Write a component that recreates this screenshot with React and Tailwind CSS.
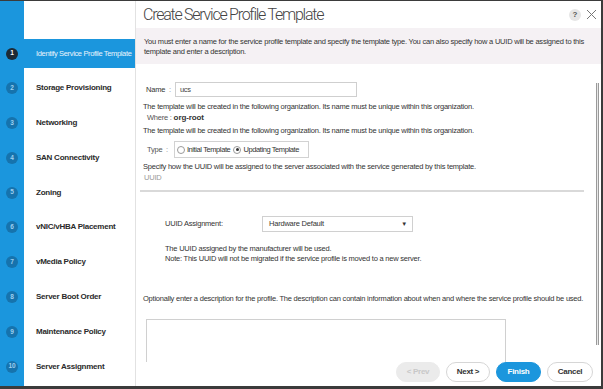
import React from 'react'

const STEPS = [
  'Identify Service Profile Template',
  'Storage Provisioning',
  'Networking',
  'SAN Connectivity',
  'Zoning',
  'vNIC/vHBA Placement',
  'vMedia Policy',
  'Server Boot Order',
  'Maintenance Policy',
  'Server Assignment',
]

const ACTIVE = 0
const BLUE = 'bg-[#1b96dd]'

function Sidebar() {
  return (
    <div className="flex w-[136px] shrink-0">
      {/* numbered strip */}
      <div className={`w-[24px] ${BLUE} flex flex-col pt-[38px] gap-[5.8px]`}>
        {STEPS.map((s, i) => (
          <div key={s} className="h-[29px] flex items-center justify-center">
            <span className={`w-[12px] h-[12px] rounded-full flex items-center justify-center text-[6.5px] font-bold leading-none ${i === ACTIVE ? 'bg-[#1d2a35] text-white' : 'bg-[#1673ad] text-[#9fd0f0]'}`}>
              {i + 1}
            </span>
          </div>
        ))}
      </div>
      {/* labels */}
      <div className="flex-1 bg-white flex flex-col pt-[38px] gap-[5.8px] border-r border-[#e2e2e2]">
        {STEPS.map((s, i) => (
          <div key={s} className={`h-[29px] flex items-center pl-[12px] whitespace-nowrap ${i === ACTIVE ? `${BLUE} text-[#e8f4fc] font-normal text-[7.5px] tracking-[-0.35px]` : 'text-[#2a2a2a] font-bold text-[8px] tracking-[-0.25px]'}`}>
            {s}
          </div>
        ))}
      </div>
    </div>
  )
}

function Radio({ checked, label }) {
  return (
    <span className="flex items-center gap-[2px]">
      <span className="w-[8px] h-[8px] rounded-full border border-[#9a9a9a] bg-white flex items-center justify-center">
        {checked && <span className="w-[3px] h-[3px] rounded-full bg-[#333]" />}
      </span>
      {label}
    </span>
  )
}

function Btn({ kind, children }) {
  const cls = {
    off: 'bg-[#ebebeb] text-[#c8c8c8] border-[#ebebeb]',
    plain: 'bg-white text-[#333] border-[#d6d6d6]',
    primary: `${BLUE} text-white border-[#1b96dd]`,
  }[kind]
  return (
    <span className={`h-[20px] rounded-full border flex items-center justify-center text-[8px] font-bold tracking-[-0.3px] ${cls}`}>
      {children}
    </span>
  )
}

export default function App() {
  return (
    <div
      className="w-[603px] h-[389px] flex bg-white border-t border-r-2 border-b-[3px] border-[#3b3b3b] overflow-hidden text-[#333]"
      style={{ fontFamily: '"Liberation Sans", Arial, sans-serif' }}
    >
      <Sidebar />

      <div className="flex-1 flex flex-col min-w-0">
        {/* header */}
        <div className="h-[27px] flex items-center pl-[7px] pr-[4px]">
          <h1 className="text-[16px] font-light tracking-[-1.25px] text-[#444] flex-1" style={{ fontFamily: 'Roboto, sans-serif' }}>
            Create Service Profile Template
          </h1>
          <span className="w-[12px] h-[12px] rounded-full bg-[#e6e6e6] flex items-center justify-center text-[8px] font-bold text-[#555] mr-[5px]">?</span>
          <svg width="11" height="11" viewBox="0 0 11 11" className="text-[#777]">
            <path d="M1 1L10 10M10 1L1 10" stroke="currentColor" strokeWidth="1" />
          </svg>
        </div>

        {/* info */}
        <div className="bg-[#f5f1f4] pl-[8px] pr-[6px] pt-[9px] pb-[7px] text-[7.5px] leading-[10px] tracking-[-0.22px] text-[#333]">
          You must enter a name for the service profile template and specify the template type. You can also specify how a UUID will be assigned to this template and enter a description.
        </div>

        {/* form */}
        <div className="flex-1 flex min-h-0">
          <div className="flex-1 overflow-hidden pl-[7px] pr-[8px] text-[7.5px] leading-[10px] tracking-[-0.22px]">
            <div className="mt-[18px] flex items-center pl-[3px]">
              <span className="w-[23px]">Name</span>
              <span className="text-[#888]">:</span>
              <span className="ml-[4px] w-[182px] h-[15px] border border-[#cfcfcf] flex items-center pl-[4px] text-[#444]">ucs</span>
            </div>
            <p className="mt-[5px]">The template will be created in the following organization. Its name must be unique within this organization.</p>
            <p className="mt-[1px] pl-[4px]">
              <span className="text-[#555]">Where : </span>
              <span className="font-bold text-[8px] tracking-[-0.1px]">org-root</span>
            </p>
            <p className="mt-[3px]">The template will be created in the following organization. Its name must be unique within this organization.</p>
            <div className="mt-[5px] flex items-center pl-[4px]">
              <span className="w-[19px] text-[#555]">Type</span>
              <span className="text-[#888]">:</span>
              <span className="ml-[6px] h-[17px] w-[135px] border border-[#d2d2d2] flex items-center gap-[3px] pl-[2px] tracking-[-0.4px]">
                <Radio label="Initial Template" />
                <Radio checked label="Updating Template" />
              </span>
            </div>
            <p className="mt-[4px]">Specify how the UUID will be assigned to the server associated with the service generated by this template.</p>
            <p className="mt-[1px] text-[#9a9a9a] pl-[1px]">UUID</p>
            <div className="mt-[7px] h-[2px] bg-[#d9d9d9] mr-[4px] -ml-[3px]" />

            <div className="mt-[24px] flex items-center pl-[22px]">
              <span className="w-[97px]">UUID Assignment:</span>
              <span className="w-[151px] h-[16px] border border-[#d0d0d0] flex items-center pl-[6px] pr-[5px] justify-between">
                Hardware Default
                <span className="text-[6px]">▼</span>
              </span>
            </div>
            <p className="mt-[12px] pl-[22px]">The UUID assigned by the manufacturer will be used.</p>
            <p className="pl-[22px]">Note: This UUID will not be migrated if the service profile is moved to a new server.</p>

            <p className="mt-[30px] whitespace-nowrap">Optionally enter a description for the profile. The description can contain information about when and where the service profile should be used.</p>
            <div className="mt-[15px] ml-[3px] w-[360px] h-[60px] border border-[#d0d0d0]" />
          </div>
          {/* scrollbar */}
          <div className="w-[5px] pt-[19px] pr-[1px]">
            <div className="h-[262px] w-[3px] border-x border-[#9a9a9a] bg-[#e9e9e9]" />
          </div>
        </div>

        {/* footer */}
        <div className="h-[24px] shrink-0 flex items-start justify-end gap-[6px] pr-[8px] bg-white -mt-[24px] relative">
          <div className="w-[44px]"><Btn kind="off">&lt; Prev</Btn></div>
          <div className="w-[44px]"><Btn kind="plain">Next &gt;</Btn></div>
          <div className="w-[45px]"><Btn kind="primary">Finish</Btn></div>
          <div className="w-[46px]"><Btn kind="plain">Cancel</Btn></div>
        </div>
      </div>
    </div>
  )
}
